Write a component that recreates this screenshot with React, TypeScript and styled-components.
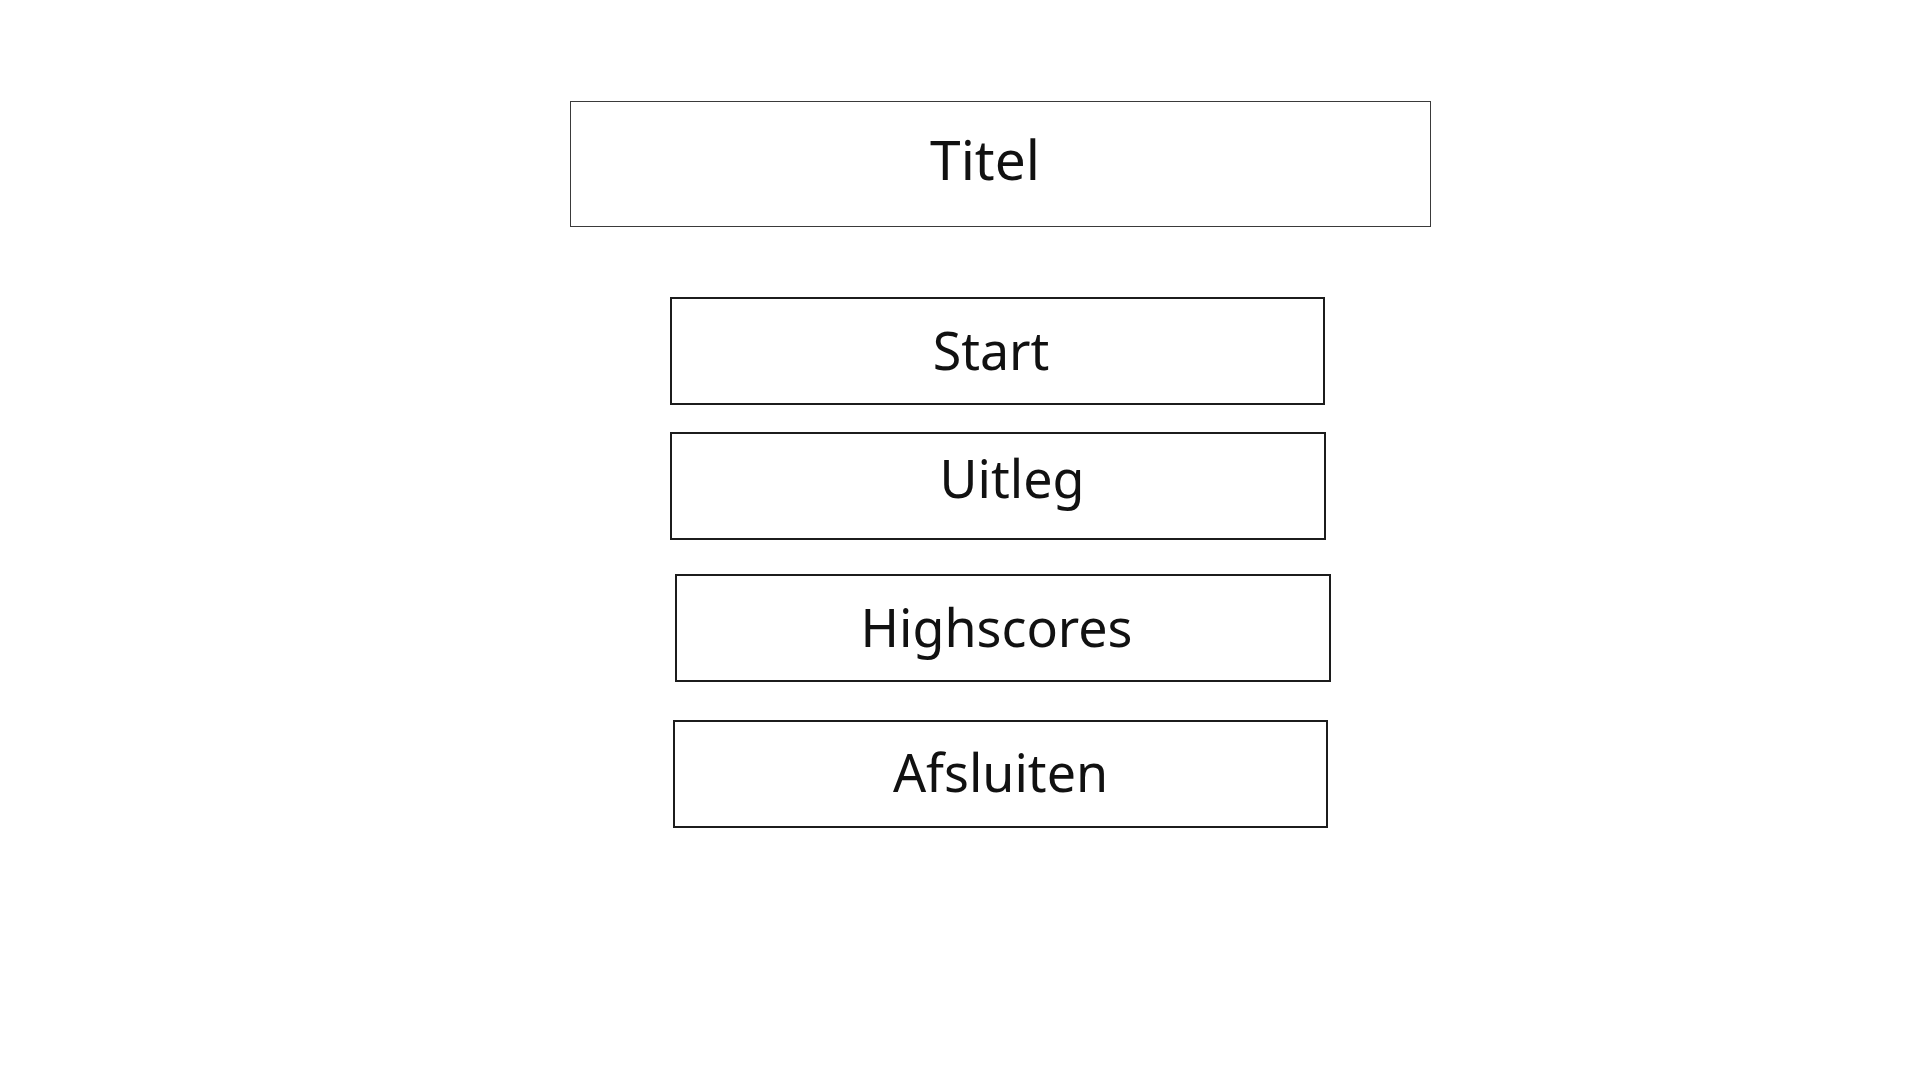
import React from "react";
import styled, { createGlobalStyle } from "styled-components";

const GlobalStyle = createGlobalStyle`
  html, body {
    margin: 0;
    padding: 0;
    background: #ffffff;
  }
  body {
    font-family: "Noto Sans", "Open Sans", "DejaVu Sans", sans-serif;
    color: #111;
  }
`;

const Page = styled.div`
  width: 1920px;
  height: 1080px;
  box-sizing: border-box;
  padding: 101px 0 0 570px;
  display: flex;
  flex-direction: column;
  align-items: flex-start;
`;

const TitleBox = styled.div<{ $shift: number }>`
  width: 861px;
  height: 126px;
  box-sizing: border-box;
  border: 1px solid #3a3a3a;
  display: flex;
  align-items: center;
  justify-content: center;
  padding-right: ${(p) => p.$shift}px;
  padding-bottom: 12px;
  font-size: 55px;
  color: #111;
`;

const Menu = styled.div`
  display: flex;
  flex-direction: column;
  align-items: flex-start;
`;

type ItemProps = {
  $indent: number;
  $top: number;
  $width: number;
  $shift: number;
  $lift: number;
};

const MenuButton = styled.div<ItemProps>`
  margin-left: ${(p) => p.$indent}px;
  margin-top: ${(p) => p.$top}px;
  width: ${(p) => p.$width}px;
  height: 108px;
  box-sizing: border-box;
  border: 2px solid #1c1c1c;
  display: flex;
  align-items: center;
  justify-content: center;
  padding-left: ${(p) => Math.max(p.$shift, 0)}px;
  padding-right: ${(p) => Math.max(-p.$shift, 0)}px;
  padding-bottom: ${(p) => 4 + p.$lift}px;
  font-size: 52px;
  color: #111;
  cursor: pointer;
`;

const items = [
  { label: "Start", indent: 100, top: 70, width: 655, shift: -13, lift: 0 },
  { label: "Uitleg", indent: 100, top: 27, width: 656, shift: 28, lift: 14 },
  { label: "Highscores", indent: 105, top: 34, width: 656, shift: -13, lift: 0 },
  { label: "Afsluiten", indent: 103, top: 38, width: 655, shift: 0, lift: 2 },
];

const App = () => {
  return (
    <>
      <GlobalStyle />
      <Page>
        <TitleBox $shift={31}>Titel</TitleBox>
        <Menu>
          {items.map((it) => (
            <MenuButton
              key={it.label}
              $indent={it.indent}
              $top={it.top}
              $width={it.width}
              $shift={it.shift}
              $lift={it.lift}
            >
              {it.label}
            </MenuButton>
          ))}
        </Menu>
      </Page>
    </>
  );
};

export default App;
